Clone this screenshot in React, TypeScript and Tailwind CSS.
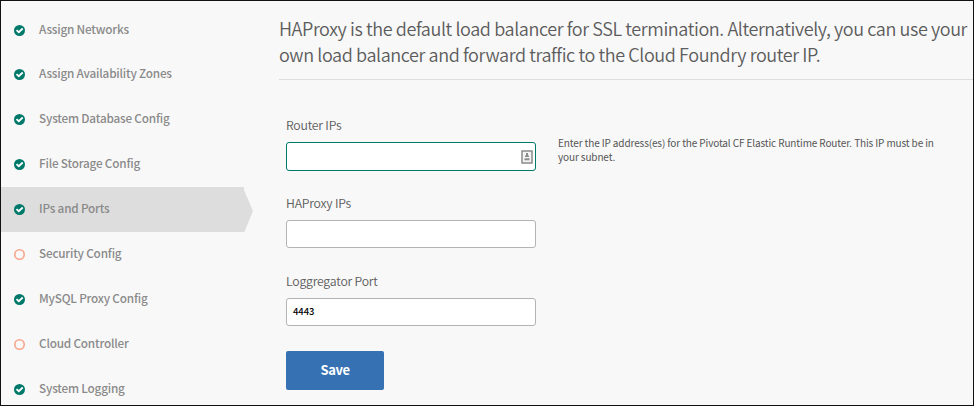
type Step = { label: string; done: boolean; active?: boolean };

const steps: Step[] = [
  { label: 'Assign Networks', done: true },
  { label: 'Assign Availability Zones', done: true },
  { label: 'System Database Config', done: true },
  { label: 'File Storage Config', done: true },
  { label: 'IPs and Ports', done: true, active: true },
  { label: 'Security Config', done: false },
  { label: 'MySQL Proxy Config', done: true },
  { label: 'Cloud Controller', done: false },
  { label: 'System Logging', done: true },
];

function StatusIcon({ done }: { done: boolean }) {
  return (
    <svg className="mt-[3px] size-[11px] shrink-0" viewBox="0 0 11 11" fill="none">
      {done ? (
        <>
          <circle cx="5.5" cy="5.5" r="5.5" fill="#00796b" />
          <path d="M2.5 5.1 4.8 7.2 8.7 3.5" stroke="#fff" strokeWidth="1.8" />
        </>
      ) : (
        <circle cx="5.5" cy="5.5" r="4.7" stroke="#f9a58c" strokeWidth="1.6" />
      )}
    </svg>
  );
}

function NavItem({ step }: { step: Step }) {
  return (
    <li className="group flex h-[45px] shrink-0 first:h-11">
      <a
        className={`flex w-[243px] items-center gap-[14px] pb-[3px] pl-[13px] group-first:pb-[2px] ${step.active ? 'bg-[#dddddd]' : ''}`}
      >
        <StatusIcon done={step.done} />
        <span className="text-[11.75px] leading-[18px] font-medium tracking-[-0.2px] whitespace-nowrap text-[#8a8a8a]">
          {step.label}
        </span>
      </a>
      {step.active && (
        <svg className="h-[46px] w-[9px]" viewBox="0 0 9 46">
          <path d="M0 3 9 24 0 46Z" fill="#dddddd" />
        </svg>
      )}
    </li>
  );
}

function ContactIcon() {
  return (
    <svg className="h-[14px] w-3" viewBox="0 0 12 14" fill="none">
      <rect x="1" y="1" width="10" height="12" stroke="#8b8b8b" strokeWidth="1.5" fill="#f4f4f4" />
      <path d="M5 3h2v2.5h1V7H4V5.500h1Z" fill="#8b8b8b" />
      <path d="M3.500 8.300h5v2h-5Z" fill="#8b8b8b" />
    </svg>
  );
}

function Field({ label, value, focused }: { label: string; value?: string; focused?: boolean }) {
  return (
    <div className="h-[78px]">
      <label className="block h-[26px] text-[12.25px] leading-[18px] font-[350] tracking-[-0.2px] whitespace-nowrap text-[#5c5c5c]">
        {label}
      </label>
      <div
        className={`flex w-[250px] items-center justify-between rounded-[3px] border bg-white pr-[2px] pl-[6px] ${
          focused ? 'h-[29px] border-[#00796b]' : 'h-[28px] border-[#b3b3b3]'
        }`}
      >
        <span className="pb-px text-[9.500px] font-medium tracking-[-0.1px] text-black">{value}</span>
        {focused && <ContactIcon />}
      </div>
    </div>
  );
}

export default function App() {
  return (
    <div className="flex h-[406px] w-[974px] overflow-hidden border border-[#111111] bg-[#f8f8f8] font-['Noto_Sans_CJK_SC',sans-serif]">
      <ul className="flex w-[278px] shrink-0 flex-col pt-[7px]">
        {steps.map((step) => (
          <NavItem key={step.label} step={step} />
        ))}
      </ul>
      <main className="flex min-w-0 flex-1 flex-col">
        <h1 className="h-[79px] border-b border-[#dddddd] pt-[14px] text-[18px] leading-[26px] font-[350] tracking-[-0.4px] text-[#5c5c5c]">
          <span className="block h-[26px] whitespace-nowrap">
            HAProxy is the default load balancer for SSL termination. Alternatively, you can use your
          </span>
          <span className="block h-[26px] whitespace-nowrap">
            own load balancer and forward traffic to the Cloud Foundry router IP.
          </span>
        </h1>
        <div className="flex pt-9 pl-[7px]">
          <form className="w-[272px] shrink-0">
            <Field label="Router IPs" focused />
            <Field label="HAProxy IPs" />
            <Field label="Loggregator Port" value="4443" />
            <button
              type="button"
              className="mt-px flex h-[39px] w-[98px] items-center justify-center rounded-[2px] bg-[#3672b3] pb-[3px] text-[13px] leading-none font-bold tracking-[-0.4px] text-white"
            >
              Save
            </button>
          </form>
          <p className="pt-[20px] text-[10px] leading-[14px] tracking-[-0.12px] whitespace-nowrap text-[#555555]">
            Enter the IP address(es) for the Pivotal CF Elastic Runtime Router. This IP must be in
            <br />
            your subnet.
          </p>
        </div>
      </main>
    </div>
  );
}
